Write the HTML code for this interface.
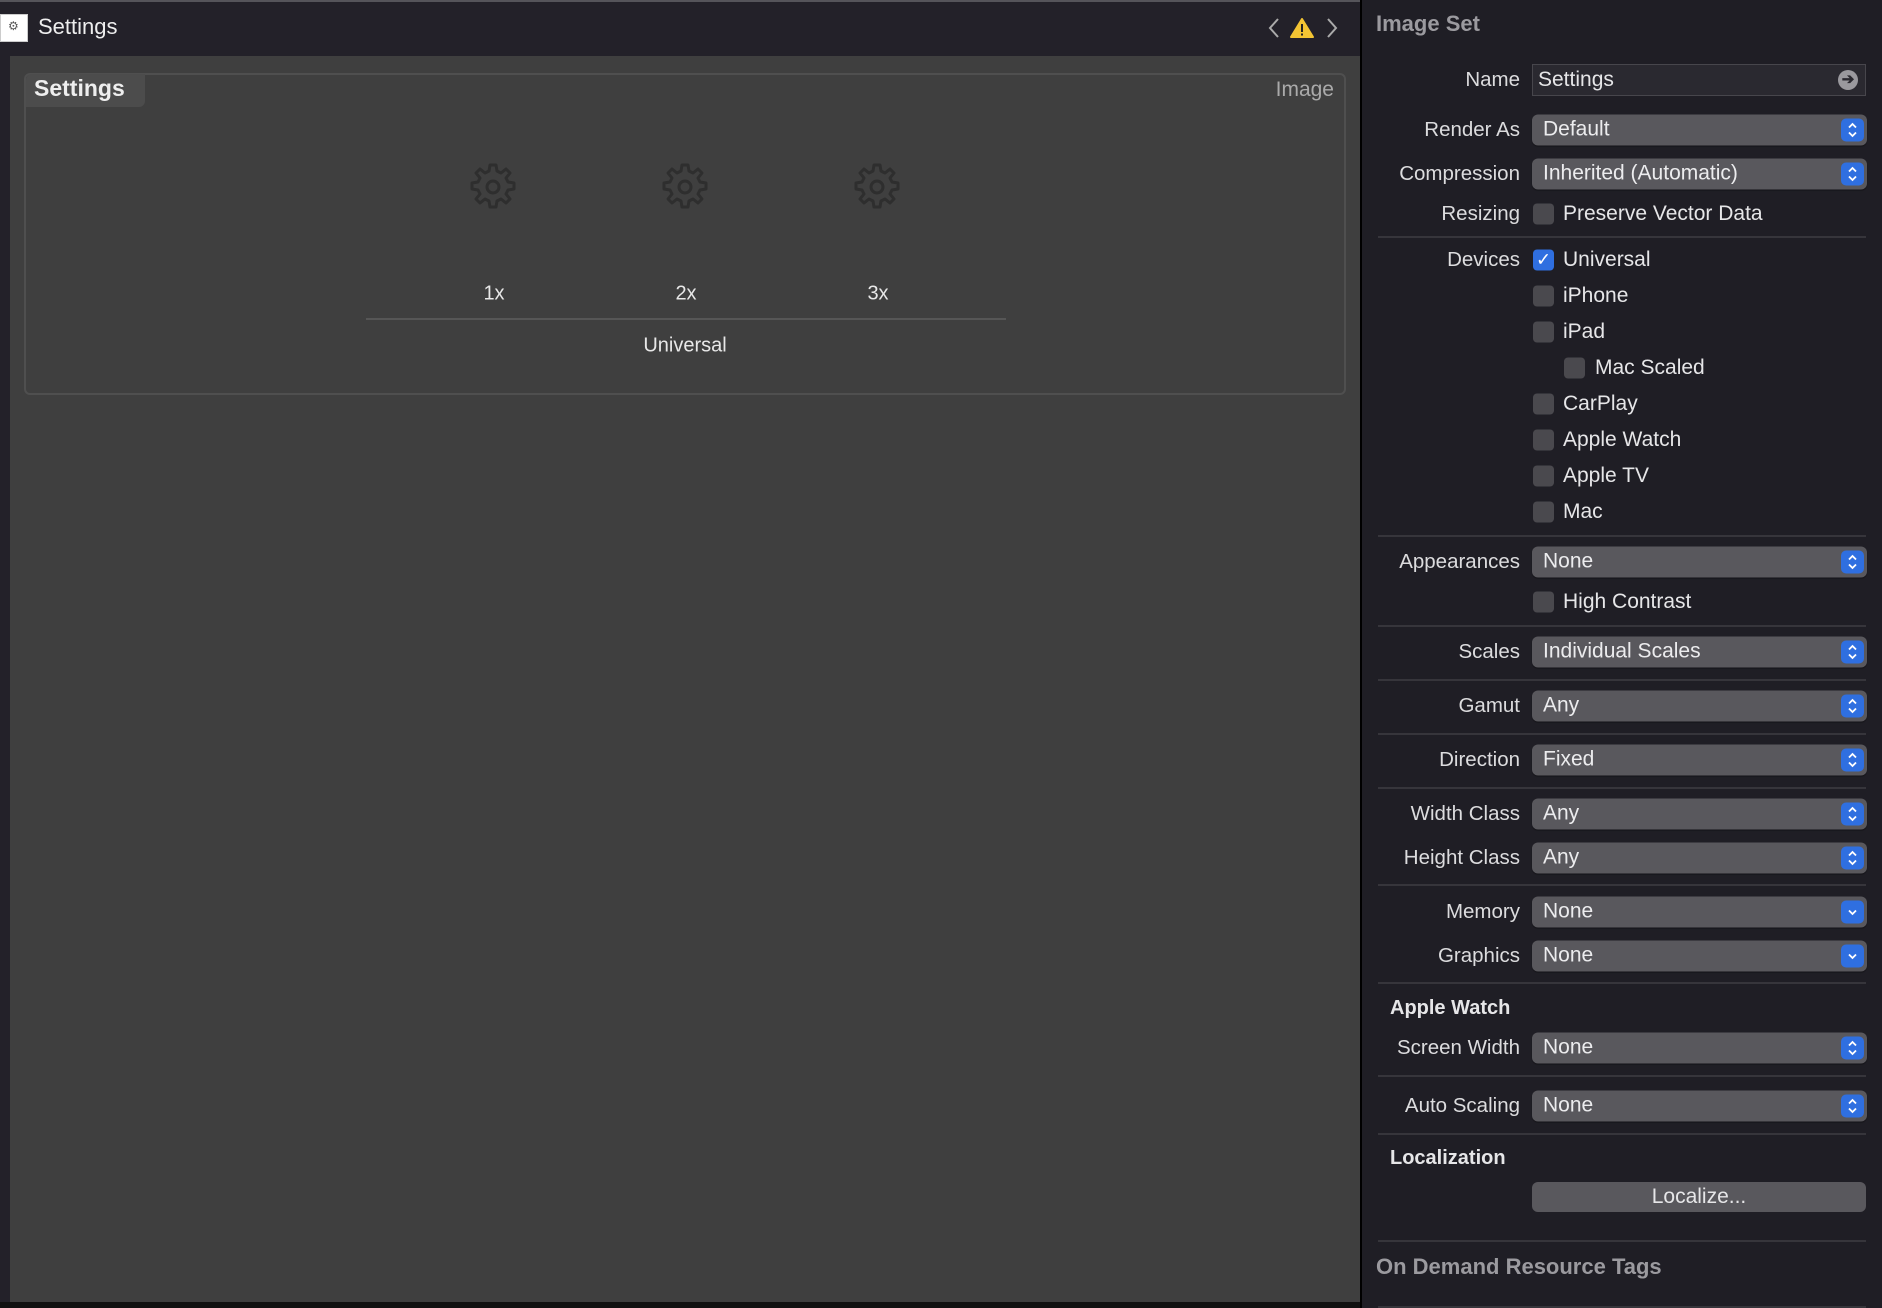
<!DOCTYPE html>
<html><head><meta charset="utf-8"><style>
*{margin:0;padding:0;box-sizing:border-box}
body{width:1882px;height:1308px;overflow:hidden;background:#1f1e25;font-family:"Liberation Sans",sans-serif;position:relative;color:#e6e6e8}
.a{position:absolute}
.lab{position:absolute;right:362px;font-size:20.5px;color:#dcdcde;white-space:nowrap;transform:translateY(-50%)}
.pop{position:absolute;left:1532px;width:335px;height:31px;background:#59585d;border-radius:6px;transform:translateY(-50%);font-size:21px;color:#ececee;padding:3px 0 0 11px;box-shadow:0 1px 1px rgba(0,0,0,.4)}
.pop svg{position:absolute;right:3px;top:4px;width:23px;height:23px}
.cb{position:absolute;width:21px;height:21px;background:#4a494e;border-radius:4px;transform:translateY(-50%)}
.cbl{position:absolute;font-size:21px;color:#e6e6e8;transform:translateY(-50%);white-space:nowrap}
.sep{position:absolute;left:1378px;width:488px;height:2px;background:#36353b}
.gear{position:absolute;width:48px;height:48px}
.sx{position:absolute;top:294px;font-size:20px;transform:translate(-50%,-50%);color:#e8e8e8}
</style></head><body>
<div class="a" style="left:0;top:0;width:1360px;height:2px;background:#55545a"></div>
<div class="a" style="left:0;top:2px;width:1360px;height:54px;background:#232129"></div>
<div class="a" style="left:0;top:14px;width:28px;height:28px;background:#fff;border:1px solid #ccc"></div>
<div class="a" style="left:8px;top:19px;font-size:12px;color:#555">⚙</div>
<div class="a" style="left:38px;top:14px;font-size:22px;color:#eee">Settings</div>
<svg class="a" style="left:1266px;top:16px" width="80" height="24" viewBox="0 0 80 24">
<path d="M12 3 L4 12 L12 21" stroke="#aaa" stroke-width="2" fill="none"/>
<path d="M36 3 L47 21 L25 21 Z" fill="#f3c433" stroke="#f3c433" stroke-linejoin="round" stroke-width="2"/>
<rect x="35" y="8" width="2" height="8" fill="#222"/><rect x="35" y="17.5" width="2" height="2" fill="#222"/>
<path d="M62 3 L70 12 L62 21" stroke="#aaa" stroke-width="2" fill="none"/>
</svg>
<div class="a" style="left:0;top:56px;width:10px;height:1246px;background:#232129"></div>
<div class="a" style="left:10px;top:56px;width:1350px;height:1246px;background:#3f3f3f"></div>
<div class="a" style="left:0;top:1302px;width:1360px;height:6px;background:#111"></div>
<div class="a" style="left:1360px;top:0;width:2px;height:1308px;background:#000"></div>
<div class="a" style="left:24px;top:73px;width:1322px;height:322px;border:2px solid #4f4f4f;border-radius:6px"></div>
<div class="a" style="left:26px;top:74px;width:119px;height:33px;background:#4c4c4c;border-radius:6px 0 6px 0"></div>
<div class="a" style="left:34px;top:75px;font-size:23px;font-weight:bold;color:#eee">Settings</div>
<div class="a" style="right:548px;top:78px;font-size:21px;color:#aaa">Image</div>
<svg width="0" height="0" style="position:absolute"><defs><g id="g"><path d="M21 2h6l1 6 4 2 5-4 4 4-4 5 2 4 6 1v6l-6 1-2 4 4 5-4 4-5-4-4 2-1 6h-6l-1-6-4-2-5 4-4-4 4-5-2-4-6-1v-6l6-1 2-4-4-5 4-4 5 4 4-2z" fill="none" stroke="#2e2e2e" stroke-width="3" stroke-linejoin="round"/><circle cx="24" cy="24" r="6" fill="none" stroke="#2e2e2e" stroke-width="3"/></g>
<g id="ud"><rect width="23" height="23" rx="5" fill="#2f6fe0"/><path d="M8 9l3.5-3.5L15 9M8 14l3.5 3.5L15 14" stroke="#fff" stroke-width="1.8" fill="none"/></g>
<g id="dn"><rect width="23" height="23" rx="5" fill="#2f6fe0"/><path d="M8 10l3.5 3.5L15 10" stroke="#fff" stroke-width="1.8" fill="none"/></g></defs></svg>
<svg class="gear" style="left:469px;top:163px" viewBox="0 0 48 48"><use href="#g"/></svg>
<svg class="gear" style="left:661px;top:163px" viewBox="0 0 48 48"><use href="#g"/></svg>
<svg class="gear" style="left:853px;top:163px" viewBox="0 0 48 48"><use href="#g"/></svg>
<div class="sx" style="left:494px">1x</div><div class="sx" style="left:686px">2x</div><div class="sx" style="left:878px">3x</div>
<div class="a" style="left:366px;top:318px;width:640px;height:2px;background:#565656"></div>
<div class="sx" style="left:685px;top:346px">Universal</div>
<div class="a" style="left:1376px;top:11px;font-size:22px;font-weight:bold;color:#9b9a9f">Image Set</div>
<div class="lab" style="top:80px">Name</div>
<div class="a" style="left:1532px;top:64px;width:334px;height:32px;background:#2a2930;border:1px solid #47464c;font-size:21px;padding:3px 0 0 5px">Settings</div>
<div class="a" style="left:1838px;top:70px;width:20px;height:20px;border-radius:50%;background:#9a999e;color:#2a2930;font-size:15px;text-align:center;line-height:20px;font-weight:bold">➔</div>
<div class="lab" style="top:130px">Render As</div><div class="pop" style="top:130px">Default<svg viewBox="0 0 23 23"><use href="#ud"/></svg></div>
<div class="lab" style="top:174px">Compression</div><div class="pop" style="top:174px">Inherited (Automatic)<svg viewBox="0 0 23 23"><use href="#ud"/></svg></div>
<div class="lab" style="top:214px">Resizing</div><div class="cb" style="left:1533px;top:214px"></div><div class="cbl" style="left:1563px;top:214px">Preserve Vector Data</div>
<div class="sep" style="top:236px"></div>
<div class="lab" style="top:260px">Devices</div>
<div class="cb" style="left:1533px;top:260px;background:#2f6fe0;color:#fff;font-size:18px;text-align:center;line-height:21px">✓</div><div class="cbl" style="left:1563px;top:260px">Universal</div>
<div class="cb" style="left:1533px;top:296px"></div><div class="cbl" style="left:1563px;top:296px">iPhone</div>
<div class="cb" style="left:1533px;top:332px"></div><div class="cbl" style="left:1563px;top:332px">iPad</div>
<div class="cb" style="left:1564px;top:368px"></div><div class="cbl" style="left:1595px;top:368px">Mac Scaled</div>
<div class="cb" style="left:1533px;top:404px"></div><div class="cbl" style="left:1563px;top:404px">CarPlay</div>
<div class="cb" style="left:1533px;top:440px"></div><div class="cbl" style="left:1563px;top:440px">Apple Watch</div>
<div class="cb" style="left:1533px;top:476px"></div><div class="cbl" style="left:1563px;top:476px">Apple TV</div>
<div class="cb" style="left:1533px;top:512px"></div><div class="cbl" style="left:1563px;top:512px">Mac</div>
<div class="sep" style="top:535px"></div>
<div class="lab" style="top:562px">Appearances</div><div class="pop" style="top:562px">None<svg viewBox="0 0 23 23"><use href="#ud"/></svg></div>
<div class="cb" style="left:1533px;top:602px"></div><div class="cbl" style="left:1563px;top:602px">High Contrast</div>
<div class="sep" style="top:625px"></div>
<div class="lab" style="top:652px">Scales</div><div class="pop" style="top:652px">Individual Scales<svg viewBox="0 0 23 23"><use href="#ud"/></svg></div>
<div class="sep" style="top:679px"></div>
<div class="lab" style="top:706px">Gamut</div><div class="pop" style="top:706px">Any<svg viewBox="0 0 23 23"><use href="#ud"/></svg></div>
<div class="sep" style="top:733px"></div>
<div class="lab" style="top:760px">Direction</div><div class="pop" style="top:760px">Fixed<svg viewBox="0 0 23 23"><use href="#ud"/></svg></div>
<div class="sep" style="top:787px"></div>
<div class="lab" style="top:814px">Width Class</div><div class="pop" style="top:814px">Any<svg viewBox="0 0 23 23"><use href="#ud"/></svg></div>
<div class="lab" style="top:858px">Height Class</div><div class="pop" style="top:858px">Any<svg viewBox="0 0 23 23"><use href="#ud"/></svg></div>
<div class="sep" style="top:884px"></div>
<div class="lab" style="top:912px">Memory</div><div class="pop" style="top:912px">None<svg viewBox="0 0 23 23"><use href="#dn"/></svg></div>
<div class="lab" style="top:956px">Graphics</div><div class="pop" style="top:956px">None<svg viewBox="0 0 23 23"><use href="#dn"/></svg></div>
<div class="sep" style="top:982px"></div>
<div class="a" style="left:1390px;top:997px;font-size:20px;font-weight:bold;color:#e6e6e8">Apple Watch</div>
<div class="lab" style="top:1048px">Screen Width</div><div class="pop" style="top:1048px">None<svg viewBox="0 0 23 23"><use href="#ud"/></svg></div>
<div class="sep" style="top:1075px"></div>
<div class="lab" style="top:1106px">Auto Scaling</div><div class="pop" style="top:1106px">None<svg viewBox="0 0 23 23"><use href="#ud"/></svg></div>
<div class="sep" style="top:1133px"></div>
<div class="a" style="left:1390px;top:1147px;font-size:20px;font-weight:bold;color:#e6e6e8">Localization</div>
<div class="a" style="left:1532px;top:1182px;width:334px;height:30px;background:#59585d;border-radius:6px;text-align:center;font-size:21px;line-height:30px">Localize...</div>
<div class="sep" style="top:1240px"></div>
<div class="a" style="left:1376px;top:1254px;font-size:22px;font-weight:bold;color:#9b9a9f">On Demand Resource Tags</div>
<div class="sep" style="top:1306px"></div>
</body></html>
